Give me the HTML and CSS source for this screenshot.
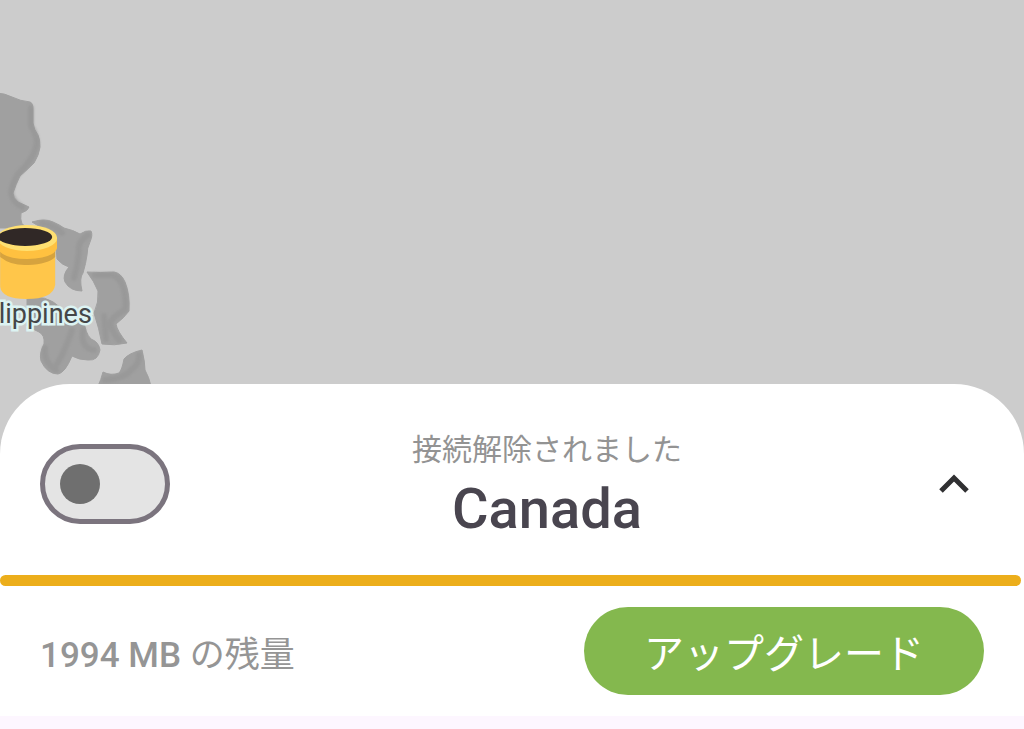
FILE: index.html
```
<!DOCTYPE html>
<html lang="ja">

<head>
    <meta charset="utf-8">
    <meta name="viewport" content="width=device-width, initial-scale=1">
    <title>VPN</title>
    <link rel="stylesheet" href="styles.css">
</head>

<body>
    <main class="map">
        <!-- Islands -->
        <svg class="islands" width="170" height="400" viewBox="0 0 170 400" aria-hidden="true">
            <g fill="#a0a0a0" stroke="#a0a0a0" stroke-width="1" stroke-linejoin="round">
                <path d="M-4 93 Q4 93 12 97 Q20 101 30 102 Q33 103 33 109 V123 Q34 130 38 135 Q40 139 40 147 Q39 155 34 163 Q27 170 20 176 Q16 184 13 193 Q13 198 18 202 L29 207 Q28 211 21 213 Q20 219 22 224 L28 228 H-4 Z" />
                <path d="M32 222 Q45 218 53 222 Q60 225 64 228 Q73 230 80 234 Q86 230 91 231 Q93 235 90 242 Q87 248 87 255 Q86 263 83 273 Q79 278 82 291 Q70 291 65 282 Q62 275 69 267 Q62 265 57 259 L55 236 Z" />
                <path d="M87 272 Q100 273 114 272 Q121 273 125 282 Q130 294 129 311 Q124 318 116 324 Q117 331 127 343 Q114 346 102 344 Q99 328 94 313 Q99 302 98 291 Q94 281 87 272 Z" />
                <path d="M27 299 Q45 293 61 308 L84 320 Q85 333 91 339 Q99 342 100 350 Q98 361 88 360 Q79 360 72 356 Q65 373 58 374 Q47 374 41 361 Q39 353 44 344 Q45 335 39 332 L27 326 Z" />
                <path d="M98 386 Q101 380 103 372 Q111 376 119 373 Q122 370 124 359 Q129 353 142 350 Q145 362 145 370 Q149 377 151 386 Z" />
            </g>
            <g class="relief" fill="none" stroke="#929292" stroke-width="6" stroke-linecap="round">
                <path d="M31 108 V126 Q36 134 37 142 Q35 158 18 174 Q12 184 11 193 Q13 202 22 207" />
                <path d="M42 223 Q54 225 62 233" />
                <path d="M88 235 Q77 242 79 251 Q78 264 74 278" />
                <path d="M95 275 H112 Q120 277 123 287 Q127 300 125 310 Q114 315 110 323 Q112 332 119 340" />
                <path d="M104 316 L106 339" />
                <path d="M72 330 Q65 351 57 364" />
                <path d="M83 330 Q80 348 94 350" />
                <path d="M45 348 Q43 362 56 370" />
                <path d="M139 355 Q139 365 132 369 Q126 378 105 380" />
            </g>
        </svg>

        <!-- Server location -->
        <a class="location" href="#philippines">
            <svg class="pipe" width="62" height="78" viewBox="-2 0 62 78" aria-hidden="true">
                <path d="M3 28 V64 Q5 76 29 76 Q56 76 58 62 V28 Z" fill="#ffc64a" />
                <path d="M3 34 Q14 43 31 42 Q51 41 58 34 V24 H3 Z" fill="#d6a33e" />
                <path d="M0 15 V24 Q4 36 30 36 Q57 35 60 25 V15 Z" fill="#ffc140" />
                <ellipse cx="30" cy="15" rx="30" ry="13" fill="#ffe071" />
                <ellipse cx="28" cy="14" rx="27" ry="9" fill="#302826" />
            </svg>
            <span class="location-name">Philippines</span>
        </a>
    </main>

    <section class="panel">
        <div class="connection">
            <input type="checkbox" role="switch" class="switch" id="ConnectSwitch" aria-labelledby="Status Country">
            <div class="connection-info">
                <p class="status" id="Status">接続解除されました</p>
                <h1 class="country" id="Country">Canada</h1>
            </div>
            <button type="button" class="expand-button" aria-label="開く">
                <svg width="60" height="60" viewBox="0 0 60 60" aria-hidden="true">
                    <path d="M17 37 L30 24 L43 37" fill="none" stroke="#303032" stroke-width="5" />
                </svg>
            </button>
        </div>
        <div class="data-bar"></div>
        <div class="plan">
            <p class="data-left">1994 MB <span class="data-unit">の残量</span></p>
            <button type="button" class="upgrade-button">アップグレード</button>
        </div>
    </section>
</body>

</html>
```
FILE: styles.css
```
body {
    margin: 0;
    min-height: 100vh;
    display: flex;
    flex-direction: column;
    padding-bottom: 13px;
    box-sizing: border-box;
    background-color: #fdf6ff;
    font-family: Roboto, "Noto Sans CJK JP", sans-serif;
}

p,
h1 {
    margin: 0;
}

.map {
    position: relative;
    flex: 1;
    min-height: 200px;
    /* the map carries on behind the rounded corners of the panel */
    margin-bottom: -72px;
    padding-bottom: 72px;
    overflow: hidden;
    background-color: #cccccc;
}

.islands {
    position: absolute;
    top: 0;
    left: 0;
}

.relief {
    opacity: 0.5;
    filter: blur(1px);
}

/* Pins are placed on the map */
.location {
    position: absolute;
    top: 223px;
    left: 26px;
    display: flex;
    flex-direction: column;
    align-items: center;
    transform: translateX(-50%);
    text-decoration: none;
}

.location-name {
    font-size: 27px;
    line-height: 26px;
    color: #444648;
    -webkit-text-stroke: 5px #dcf3f2;
    paint-order: stroke fill;
}

.panel {
    position: relative;
    border-radius: 70px 70px 0 0;
    background-color: #ffffff;
}

.connection {
    display: flex;
    align-items: center;
    padding: 40px 40px 32px;
}

.switch {
    appearance: none;
    display: flex;
    align-items: center;
    width: 130px;
    height: 80px;
    margin: 0;
    padding: 0 15px;
    box-sizing: border-box;
    border: 5px solid #7b747e;
    border-radius: 40px;
    background-color: #e4e4e4;
    cursor: pointer;
}

.switch::before {
    content: "";
    width: 40px;
    height: 40px;
    border-radius: 50%;
    background-color: #6f6f6f;
}

.switch:checked {
    justify-content: flex-end;
    background-color: #84b84e;
}

.connection-info {
    flex: 1;
    text-align: center;
}

.status {
    font-size: 30px;
    line-height: 52px;
    color: #939393;
}

.country {
    font-size: 56px;
    line-height: 67px;
    font-weight: 500;
    color: #49454f;
}

.expand-button {
    display: flex;
    padding: 0;
    border: none;
    background-color: transparent;
    cursor: pointer;
}

.data-bar {
    height: 11px;
    margin-right: 3px;
    border-radius: 6px;
    background-color: #ecae1b;
}

.plan {
    display: flex;
    align-items: center;
    justify-content: space-between;
    padding: 21px 40px;
}

.data-left {
    font-size: 35px;
    font-weight: 500;
    color: #959595;
}

.data-unit {
    font-weight: 400;
}

.upgrade-button {
    width: 400px;
    height: 88px;
    border: none;
    border-radius: 44px;
    background-color: #84b84e;
    color: #ffffff;
    font-family: inherit;
    font-size: 40px;
    cursor: pointer;
}
```
